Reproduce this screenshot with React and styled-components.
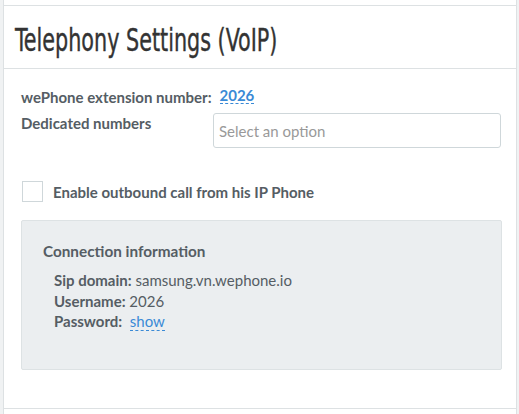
import React from 'react';
import styled, { createGlobalStyle } from 'styled-components';

const GlobalStyle = createGlobalStyle`
    html, body {
        margin: 0;
        background: #f0f2f3;
    }
    body {
        font-family: Lato, "Open Sans", sans-serif;
        color: #555d64;
    }
`;

const Page = styled.div`
    padding: 0 2px 0 3px;
    height: 414px;
    overflow: hidden;
`;

const Panel = styled.section`
    background: #fff;
    border: 1px solid #dde1e3;
    border-top: 0;
    height: ${p => p.$height || 'auto'};
    box-sizing: border-box;
`;

const PanelHeader = styled.header`
    height: 63px;
    border-bottom: 1px solid #dde1e3;
    display: flex;
    align-items: center;
    padding: 0 11px;
    box-sizing: border-box;

    h2 {
        margin: 5px 0 0;
        font-family: "DejaVu Sans Condensed", "DejaVu Sans", sans-serif;
        font-weight: 400;
        font-size: 32px;
        color: #333;
        white-space: nowrap;
        -webkit-text-stroke: 0.4px #333;
        transform: scaleX(0.72);
        transform-origin: left center;
    }
`;

const PanelBody = styled.div`
    padding: 18px 14px 38px 17px;
`;

const FieldRow = styled.div`
    display: flex;
    align-items: flex-start;
    gap: ${p => p.$gap || '6px'};
`;

const Label = styled.span`
    font-weight: 700;
    font-size: 15px;
    line-height: 20px;
    width: ${p => p.$width || 'auto'};
    margin-top: ${p => p.$mt || '0'};
`;

const Editable = styled.a`
    color: #3a8ad6;
    font-weight: ${p => (p.$bold ? 700 : 400)};
    font-size: 15px;
    text-decoration: none;
    border-bottom: 1px dashed #3a8ad6;
    line-height: 16px;
    cursor: pointer;
`;

const Select = styled.div`
    flex: 1;
    height: 35px;
    box-sizing: border-box;
    border: 1px solid #cfd7da;
    border-radius: 3px;
    display: flex;
    align-items: center;
    padding: 0 5px;
    font-size: 15px;
    color: #999;
    margin: 6px 1px 0 0;
`;

const CheckRow = styled.label`
    display: flex;
    align-items: center;
    gap: 10px;
    margin: 33px 0 18px 1px;
    font-weight: 700;
    font-size: 15px;
`;

const Box = styled.span`
    width: 21px;
    height: 21px;
    box-sizing: border-box;
    border: 1px solid #cfd7da;
    background: #fff;
`;

const InfoBox = styled.div`
    background: #ebeef0;
    border: 1px solid #dde2e4;
    border-radius: 2px;
    padding: 20px 21px 36px;
    height: 150px;
    box-sizing: border-box;

    h4 {
        margin: 0 0 9px;
        font-size: 15.3px;
        line-height: 20px;
        font-weight: 700;
    }
`;

const InfoList = styled.div`
    padding-left: 11px;
    display: flex;
    flex-direction: column;
    font-size: 15px;
    line-height: 20.5px;

    b {
        font-weight: 700;
    }
`;

export default function App() {
    return (
        <>
            <GlobalStyle />
            <Page>
                <Panel $height="6px" />
                <Panel $height="403px">
                    <PanelHeader>
                        <h2>Telephony Settings (VoIP)</h2>
                    </PanelHeader>
                    <PanelBody>
                        <FieldRow $gap="8px">
                            <Label>wePhone extension number:</Label>
                            <Editable $bold>2026</Editable>
                        </FieldRow>
                        <FieldRow>
                            <Label $width="186px" $mt="6px">Dedicated numbers</Label>
                            <Select>Select an option</Select>
                        </FieldRow>
                        <CheckRow>
                            <Box />
                            Enable outbound call from his IP Phone
                        </CheckRow>
                        <InfoBox>
                            <h4>Connection information</h4>
                            <InfoList>
                                <div><b>Sip domain:</b> samsung.vn.wephone.io</div>
                                <div><b>Username:</b> 2026</div>
                                <div><b>Password:</b>&nbsp; <Editable>show</Editable></div>
                            </InfoList>
                        </InfoBox>
                    </PanelBody>
                </Panel>
                <Panel $height="20px" />
            </Page>
        </>
    );
}
